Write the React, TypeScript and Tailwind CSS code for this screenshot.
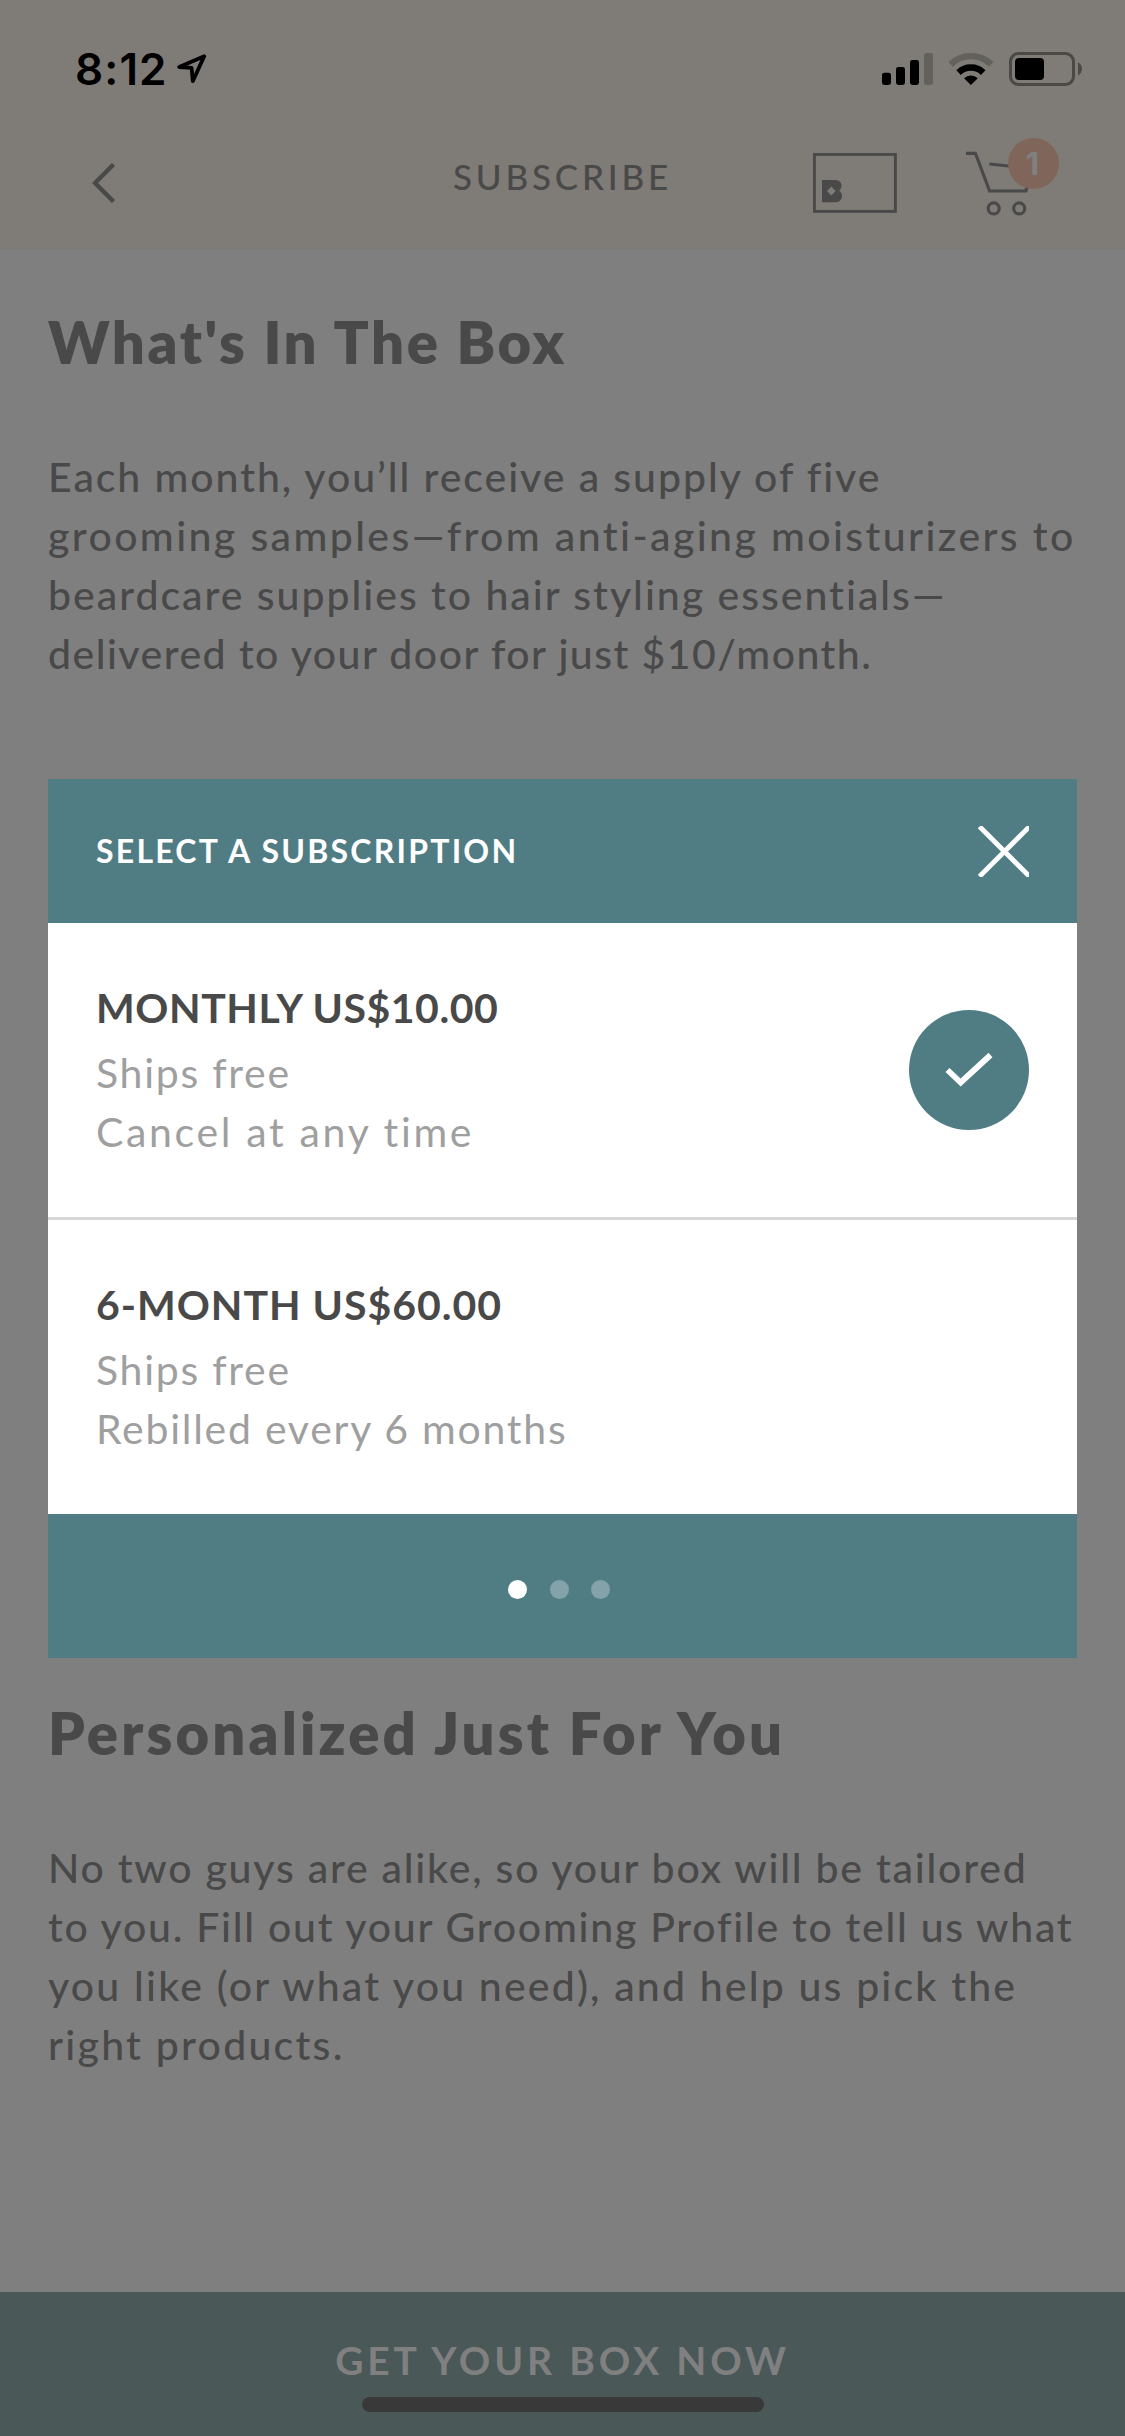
import React from "react";

type Line = { text: string; tracking: string };

const BOX_LINES: Line[] = [
  { text: "Each month, you’ll receive a supply of five", tracking: "tracking-[1.93px]" },
  { text: "grooming samples—from anti-aging moisturizers to", tracking: "tracking-[2.39px]" },
  { text: "beardcare supplies to hair styling essentials—", tracking: "tracking-[1.98px]" },
  { text: "delivered to your door for just $10/month.", tracking: "tracking-[1.46px]" },
];

const PERSONAL_LINES: Line[] = [
  { text: "No two guys are alike, so your box will be tailored", tracking: "tracking-[1.77px]" },
  { text: "to you. Fill out your Grooming Profile to tell us what", tracking: "tracking-[1.74px]" },
  { text: "you like (or what you need), and help us pick the", tracking: "tracking-[2.18px]" },
  { text: "right products.", tracking: "tracking-[2.25px]" },
];

function StatusBar() {
  return (
    <div className="flex h-[138px] items-center justify-between pl-[75px] pr-[42px]">
      <div className="flex items-center gap-[9px]">
        <span className="font-['Inter',sans-serif] text-[44px] font-semibold leading-none tracking-[1.1px] text-black">
          8:12
        </span>
        <svg width="30" height="30" viewBox="0 0 30 30" className="block">
          <path
            d="M27.2 2.2 L2.2 13 L14.6 13.8 L15.8 27.2 Z"
            fill="none"
            stroke="#000"
            strokeWidth="3.8"
            strokeLinejoin="round"
          />
        </svg>
      </div>
      <div className="flex items-center">
        <svg width="52" height="34" viewBox="0 0 52 34" className="block">
          <rect x="0" y="20.7" width="9" height="12.3" rx="2.4" fill="#000" />
          <rect x="14" y="15" width="9" height="18" rx="2.4" fill="#000" />
          <rect x="28" y="8" width="9" height="25" rx="2.4" fill="#000" />
          <rect x="42" y="1" width="9" height="32" rx="2.4" fill="#63615c" />
        </svg>
        <svg width="46" height="34" viewBox="0 0 46 34" className="ml-[14px] block">
          <path d="M2.6 12.4 A29 29 0 0 1 43.2 12.4" fill="none" stroke="#63615c" strokeWidth="6.4" />
          <path d="M10.6 20.6 A17.5 17.5 0 0 1 35.2 20.6" fill="none" stroke="#000" strokeWidth="6.4" />
          <path d="M22.9 33 L16 26.2 A10 10 0 0 1 29.8 26.2 Z" fill="#000" />
        </svg>
        <svg width="74" height="34" viewBox="0 0 74 34" className="ml-[15px] block">
          <rect x="1.5" y="1.5" width="63" height="31" rx="8" fill="none" stroke="#4b4946" strokeWidth="3" />
          <rect x="6" y="6" width="29" height="22" rx="4" fill="#000" />
          <path d="M69 10.5 C74.3 12.5 74.3 21 69 23.5 Z" fill="#4b4946" />
        </svg>
      </div>
    </div>
  );
}

function CardIcon() {
  return (
    <svg width="84" height="60" viewBox="0 0 84 60" className="block">
      <rect x="1.4" y="1.4" width="81" height="57" fill="none" stroke="#494949" strokeWidth="2.9" />
      <path
        fillRule="evenodd"
        fill="#494949"
        d="M9 27 H22 C27 27 29 30.5 28.4 33.5 C28.1 36 26.8 37.2 26 37.8 C27.5 38.6 29 40.2 29 43 C29 46.5 26.5 49.3 22.5 49.3 H9 Z M18.3 33.6 L14 38 L18.3 42.4 L22.7 38 Z"
      />
    </svg>
  );
}

function CartIcon() {
  return (
    <div className="relative h-[80px] w-[94px]">
      <svg width="94" height="80" viewBox="0 0 94 80" className="block">
        <g fill="none" stroke="#494949" strokeWidth="3.2">
          <path d="M0 15.3 H9.4 L23.6 53 H60 L64 38" />
          <path d="M23.4 26 L52 29" />
          <circle cx="27.7" cy="70.4" r="5.5" />
          <circle cx="53.2" cy="70.4" r="5.5" />
        </g>
      </svg>
      <div className="absolute left-[42px] top-0 flex size-[51px] items-center justify-center rounded-full bg-[#80665a] pr-[2px] font-['Inter',sans-serif] text-[31px] font-bold leading-none text-[#808080]">
        1
      </div>
    </div>
  );
}

function TopBar() {
  return (
    <header className="h-[249px] bg-[#7f7b76]">
      <StatusBar />
      <div className="flex h-[111px] items-center pb-[21px] pl-[92px] text-[#494949]">
        <svg width="24" height="40" viewBox="0 0 24 40" className="block">
          <path d="M21.5 1.5 L3 20 L21.5 38.5" fill="none" stroke="#494949" strokeWidth="4.4" />
        </svg>
        <h1 className="mb-[14px] ml-[337px] w-[360px] text-[35px] font-medium leading-none tracking-[3.8px]">
          SUBSCRIBE
        </h1>
        <CardIcon />
        <div className="mb-[10px] ml-[69px]">
          <CartIcon />
        </div>
      </div>
    </header>
  );
}

function Copy({ lines }: { lines: Line[] }) {
  return (
    <p className="mt-[70px] text-[41px] font-medium leading-[59px]">
      {lines.map((line) => (
        <span key={line.text} className={`block whitespace-nowrap ${line.tracking}`}>
          {line.text}
        </span>
      ))}
    </p>
  );
}

type PlanProps = {
  title: string;
  titleTracking: string;
  shipping: string;
  terms: string;
  termsTracking: string;
  selected?: boolean;
};

function Plan({ title, titleTracking, shipping, terms, termsTracking, selected }: PlanProps) {
  return (
    <div className="flex h-[294px] items-center justify-between bg-white px-12">
      <div className="pb-[1px] text-[41px] leading-[59px] text-[#9f9f9f]">
        <div className={`mb-[6px] font-bold text-[#494949] ${titleTracking}`}>{title}</div>
        <div className="tracking-[1.72px]">{shipping}</div>
        <div className={termsTracking}>{terms}</div>
      </div>
      {selected && (
        <div className="flex size-[120px] items-center justify-center rounded-full bg-[#507c84]">
          <svg width="48" height="36" viewBox="0 0 48 36" className="block">
            <path d="M2.5 18 L15.7 30.5 L45.5 3" fill="none" stroke="#fff" strokeWidth="5.8" />
          </svg>
        </div>
      )}
    </div>
  );
}

function SubscriptionDialog() {
  return (
    <div
      role="dialog"
      aria-label="Select a subscription"
      className="absolute left-12 top-[779px] flex w-[1029px] flex-col bg-[#507c84]"
    >
      <div className="flex h-[144px] items-center justify-between px-12">
        <h3 className="text-[32px] font-bold tracking-[2.22px] text-white">SELECT A SUBSCRIPTION</h3>
        <svg width="51" height="51" viewBox="0 0 51 51" className="block">
          <path d="M1.5 0.5 L51.5 50.5 M51.5 0.5 L1.5 50.5" fill="none" stroke="#fff" strokeWidth="4.8" />
        </svg>
      </div>
      <Plan
        title="MONTHLY US$10.00"
        titleTracking="tracking-[0.56px]"
        shipping="Ships free"
        terms="Cancel at any time"
        termsTracking="tracking-[2.66px]"
        selected
      />
      <div className="h-[3px] bg-[#d8d8d8]" />
      <Plan
        title="6-MONTH US$60.00"
        titleTracking="tracking-[0.98px]"
        shipping="Ships free"
        terms="Rebilled every 6 months"
        termsTracking="tracking-[1.74px]"
      />
      <div className="flex h-[144px] items-center justify-center gap-[22.5px] pr-[7px] pt-[6px]">
        <span className="size-[19px] rounded-full bg-white" />
        <span className="size-[19px] rounded-full bg-[#84a2a9]" />
        <span className="size-[19px] rounded-full bg-[#84a2a9]" />
      </div>
    </div>
  );
}

export default function App() {
  return (
    <div className="relative flex h-[2436px] w-[1125px] flex-col overflow-hidden bg-[#7f7f7f] font-['Lato',sans-serif] text-[#494949]">
      <TopBar />
      <main className="flex-1 px-12 pt-[58px]">
        <section className="h-[1391px]">
          <h2 className="text-[58px] font-extrabold leading-[70px] tracking-[2.62px]">What's In The Box</h2>
          <Copy lines={BOX_LINES} />
        </section>
        <section>
          <h2 className="text-[58px] font-extrabold leading-[70px] tracking-[3.14px]">Personalized Just For You</h2>
          <Copy lines={PERSONAL_LINES} />
        </section>
      </main>
      <footer className="flex h-[144px] flex-col items-center bg-[#4a5858] pt-[44px]">
        <button className="text-[39px] font-bold leading-[48px] tracking-[3.84px] text-[#808080]">
          GET YOUR BOX NOW
        </button>
        <div className="mt-[13px] h-[15px] w-[402px] rounded-full bg-[#393939]" />
      </footer>
      <SubscriptionDialog />
    </div>
  );
}
